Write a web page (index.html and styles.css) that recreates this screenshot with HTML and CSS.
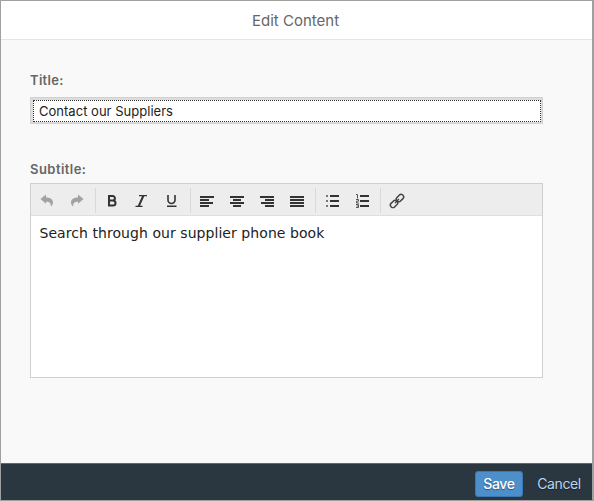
FILE: index.html
```html
<!DOCTYPE html>
<html lang="en">
<head>
<meta charset="utf-8">
<title>Edit Content</title>
<link rel="stylesheet" href="styles.css">
</head>
<body>
<div class="dialog">
  <header class="dialog-header"><span>Edit Content</span></header>
  <main class="dialog-body">
    <label class="label label-title"><span>Title:</span></label>
    <div class="field"><div class="field-focus"><span class="field-text">Contact our Suppliers</span></div></div>
    <label class="label label-subtitle"><span>Subtitle:</span></label>
    <section class="editor">
      <div class="toolbar">
        <div class="group">
          <svg class="icon muted" viewBox="0 0 16 16"><path d="M1.500 6 7 1.500v3c4.800 0 7 2.200 7 5 0 1.700-.8 3-2.300 4 .5-3-.7-4.700-4.700-4.700v2z"/></svg>
          <svg class="icon muted" viewBox="0 0 16 16"><path d="M14.500 6 9 1.500v3c-4.800 0-7 2.200-7 5 0 1.700.8 3 2.300 4-.5-3 .7-4.700 4.700-4.700v2z"/></svg>
        </div>
        <div class="group">
          <svg class="icon" viewBox="0 0 16 16"><path class="bold" d="M5 3h3.700a2.200 2.200 0 0 1 0 4.400H5zM5 7.400h4a2.500 2.500 0 0 1 0 5H5z"/></svg>
          <svg class="icon" viewBox="0 0 16 16"><path d="M5 2h8v1.300h-2.700L6 12.700h2.500V14H1.500v-1.300h2.300L8 3.300H5z"/></svg>
          <svg class="icon" viewBox="0 0 16 16"><path class="under" d="M4 2v5a3.500 3.500 0 0 0 7 0V2"/><path d="M3 12.500h9.500V14H3z"/></svg>
        </div>
        <div class="group">
          <svg class="icon" viewBox="0 0 16 16"><path d="M1 3h14v2H1zM1 6h9v2H1zM1 9h13v2H1zM1 12h9v2H1z"/></svg>
          <svg class="icon" viewBox="0 0 16 16"><path d="M1 3h14v2H1zM4 6h8v2H4zM1 9h14v2H1zM4 12h8v2H4z"/></svg>
          <svg class="icon" viewBox="0 0 16 16"><path d="M1 3h14v2H1zM6 6h9v2H6zM2 9h13v2H2zM6 12h9v2H6z"/></svg>
          <svg class="icon" viewBox="0 0 16 16"><path d="M1 3h14v2H1zM1 6h14v2H1zM1 9h14v2H1zM1 12h14v2H1z"/></svg>
        </div>
        <div class="group">
          <svg class="icon" viewBox="0 0 16 16"><path d="M6 2h9v2H6zM6 7h9v2H6zM6 12h9v2H6z"/><path class="dot" d="M2 2h2v2H2zM2 7h2v2H2zM2 12h2v2H2z"/></svg>
          <svg class="icon" viewBox="0 0 16 16"><path d="M6 2h9v2H6zM6 7h9v2H6zM6 12h9v2H6z"/><path class="digits" d="M2 1.500h1.500v4M2 6.500h2.500v1.700H2.500V10H5M2 11.500h2.500v3H2M2.500 13h2"/></svg>
        </div>
        <div class="group last">
          <svg class="icon" viewBox="0 0 16 16"><g class="link" transform="rotate(-45 8 8)"><rect x="-.2" y="5.500" width="8" height="5" rx="2.300"/><rect x="8.200" y="5.500" width="8" height="5" rx="2.300"/></g><path class="bridge" d="M6 10l4-4"/></svg>
        </div>
      </div>
      <div class="editor-text"><span>Search through our supplier phone book</span></div>
    </section>
  </main>
  <footer class="dialog-footer">
    <button class="btn save"><span>Save</span></button>
    <button class="btn cancel"><span>Cancel</span></button>
  </footer>
</div>
</body>
</html>
```
FILE: styles.css
```css
* { box-sizing: border-box; }
body { margin: 0; font-family: Inter, "Liberation Sans", sans-serif; }
.dialog {
  display: flex;
  flex-direction: column;
  width: 594px;
  height: 501px;
  border: 1px solid #a0a0a0;
  border-right: 2px solid #9fa0a0;
  background: #f9f9f9;
}
.dialog-header {
  height: 39px;
  flex: none;
  padding-left: 251px;
  background: #fff;
  border-bottom: 1px solid #e5e5e5;
  color: #666;
  font-size: 15px;
  line-height: 39px;
}
.dialog-body { flex: 1; padding: 30px 49px 0 29px; }
.label {
  display: block;
  height: 20px;
  color: #666;
  font-size: 13px;
  font-weight: 600;
  line-height: 20px;
  letter-spacing: .3px;
}
.label-title { margin-bottom: 7px; }
.label-subtitle { margin: 35px 0 4px; letter-spacing: .45px; }
.field {
  height: 27px;
  border: 1px solid #d2d2d2;
  padding: 1px;
  background: #dcdcdc;
}
.field-focus {
  height: 23px;
  margin: 1px 0 0 1px;
  border: 1px dotted #333;
  background: #fff;
  padding-left: 5px;
  color: #222;
  font-size: 13px;
  line-height: 20px;
  letter-spacing: .02px;
}
.field .field-focus { height: 22px; }
.editor {
  display: flex;
  flex-direction: column;
  height: 195px;
  border: 1px solid #d0d0d0;
  background: #fff;
}
.toolbar {
  display: flex;
  align-items: center;
  height: 32px;
  flex: none;
  padding-top: 2px;
  background: #ededed;
  border-bottom: 1px solid #dedede;
}
.group {
  display: flex;
  gap: 14px;
  height: 25px;
  align-items: center;
  padding: 0 10px 0 8px;
  border-right: 1px solid #d9d9d9;
}
.group.last { border: 0; }
.icon { display: block; width: 16px; height: 16px; fill: #333; }
.muted { fill: #a2a2a2; }
.bold { fill: none; stroke: #333; stroke-width: 2; }
.under { fill: none; stroke: #333; stroke-width: 1.6; }
.dot { fill: #777; }
.digits { fill: none; stroke: #555; stroke-width: 1; }
.link { fill: none; stroke: #444; stroke-width: 1.5; }
.bridge { stroke: #444; stroke-width: 1.3; }
.editor-text {
  padding: 7px 8.5px;
  color: #222;
  font-family: "DejaVu Sans", sans-serif;
  font-size: 14px;
  line-height: 20px;
  letter-spacing: .06px;
}
.dialog-footer {
  display: flex;
  justify-content: flex-end;
  height: 37px;
  flex: none;
  padding: 7px 3px 0 0;
  background: #2b3740;
  border-top: 1px solid #5b6b70;
}
.btn {
  height: 26px;
  padding: 0;
  border: 1px solid transparent;
  border-radius: 3px;
  background: none;
  font: 14px/24px Inter, "Liberation Sans", sans-serif;
  text-align: center;
  text-shadow: 0 1px 1px #0006;
}
.save { width: 48px; margin-right: 6px; border-color: #3a78b5; background: #4c8fca; color: #fff; font-weight: 500; letter-spacing: -.35px; }
.cancel { width: 60px; color: #b9d5ec; letter-spacing: -.4px; }
```
